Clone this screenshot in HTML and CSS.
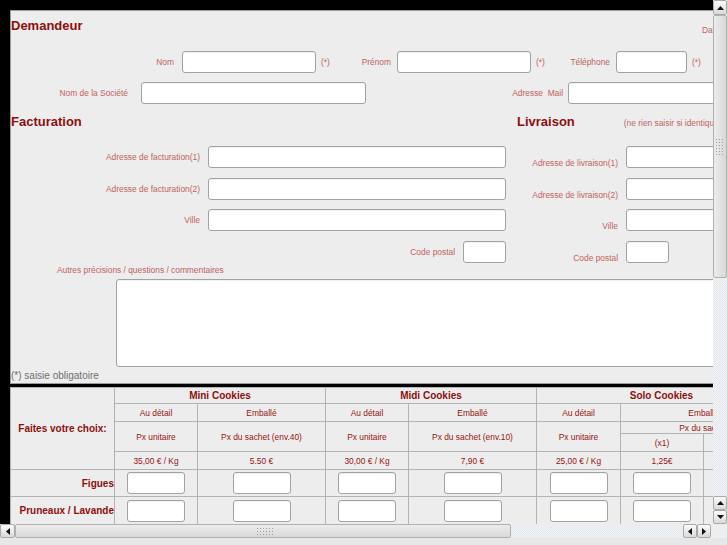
FILE: index.html
```html
<!DOCTYPE html>
<html lang="fr">
  <head>
    <meta charset="UTF-8" />
    <meta name="viewport" content="width=device-width, initial-scale=1.0" />
    <title>Commande de cookies</title>
    <link rel="stylesheet" href="styles.css">
  </head>
  <body>
    <div class="screen">
      <div class="viewport">
        <div class="page">
          <form class="panel demande">
            <div class="head-row">
              <h2 class="title">Demandeur</h2>
              <span class="lbl date">Date de la demande :</span>
            </div>

            <div class="row">
              <label class="lbl l-nom">Nom</label>
              <input class="field w-name" type="text" />
              <span class="lbl req">(*)</span>
              <label class="lbl l-prenom">Prénom</label>
              <input class="field w-name" type="text" />
              <span class="lbl req">(*)</span>
              <label class="lbl l-tel">Téléphone</label>
              <input class="field w-tel" type="text" />
              <span class="lbl req">(*)</span>
            </div>
            <div class="row row-2">
              <label class="lbl l-societe">Nom de la Société</label>
              <input class="field w-societe" type="text" />
              <label class="lbl l-mail">Adresse&nbsp; Mail</label>
              <input class="field w-mail" type="text" />
            </div>

            <div class="cols">
              <div class="col col-fact">
                <h2 class="title">Facturation</h2>
                <div class="rows">
                  <div class="row">
                    <label class="lbl l-fact">Adresse de facturation(1)</label>
                    <input class="field w-addr" type="text" />
                  </div>
                  <div class="row">
                    <label class="lbl l-fact">Adresse de facturation(2)</label>
                    <input class="field w-addr" type="text" />
                  </div>
                  <div class="row tight">
                    <label class="lbl l-fact">Ville</label>
                    <input class="field w-addr" type="text" />
                  </div>
                  <div class="row">
                    <label class="lbl l-cp">Code postal</label>
                    <input class="field w-cp" type="text" />
                  </div>
                </div>
              </div>

              <div class="col col-livr">
                <div class="head-livr">
                  <h2 class="title">Livraison</h2>
                  <span class="lbl note">(ne rien saisir si identique à l'adresse de facturation)</span>
                </div>
                <div class="rows">
                  <div class="row bottom">
                    <label class="lbl l-livr">Adresse de livraison(1)</label>
                    <input class="field w-addr" type="text" />
                  </div>
                  <div class="row bottom">
                    <label class="lbl l-livr">Adresse de livraison(2)</label>
                    <input class="field w-addr" type="text" />
                  </div>
                  <div class="row bottom tight">
                    <label class="lbl l-livr">Ville</label>
                    <input class="field w-addr" type="text" />
                  </div>
                  <div class="row bottom">
                    <label class="lbl l-livr">Code postal</label>
                    <input class="field w-cp" type="text" />
                  </div>
                </div>
              </div>
            </div>

            <p class="lbl comment-lbl">Autres précisions / questions / commentaires</p>
            <textarea class="field comments"></textarea>
            <p class="mandatory">(*) saisie obligatoire</p>
          </form>

          <div class="panel choix">
            <div class="cell head r5">Faites votre choix:</div>
            <div class="cell head c2">Mini Cookies</div>
            <div class="cell head c2">Midi Cookies</div>
            <div class="cell head c3">Solo Cookies</div>

            <div class="cell">Au détail</div>
            <div class="cell">Emballé</div>
            <div class="cell">Au détail</div>
            <div class="cell">Emballé</div>
            <div class="cell">Au détail</div>
            <div class="cell c2">Emballé</div>

            <div class="cell r2">Px unitaire</div>
            <div class="cell r2">Px du sachet (env.40)</div>
            <div class="cell r2">Px unitaire</div>
            <div class="cell r2">Px du sachet (env.10)</div>
            <div class="cell r2">Px unitaire</div>
            <div class="cell c2">Px du sachet</div>
            <div class="cell">(x1)</div>
            <div class="cell">(x12)</div>

            <div class="cell">35,00 € / Kg</div>
            <div class="cell">5.50 €</div>
            <div class="cell">30,00 € / Kg</div>
            <div class="cell">7,90 €</div>
            <div class="cell">25,00 € / Kg</div>
            <div class="cell">1,25€</div>
            <div class="cell">14,00€</div>

            <div class="cell head name">Figues</div>
            <div class="cell"><input class="field qty" type="text" /></div>
            <div class="cell"><input class="field qty" type="text" /></div>
            <div class="cell"><input class="field qty" type="text" /></div>
            <div class="cell"><input class="field qty" type="text" /></div>
            <div class="cell"><input class="field qty" type="text" /></div>
            <div class="cell"><input class="field qty" type="text" /></div>
            <div class="cell"><input class="field qty" type="text" /></div>

            <div class="cell head name">Pruneaux / Lavande</div>
            <div class="cell"><input class="field qty" type="text" /></div>
            <div class="cell"><input class="field qty" type="text" /></div>
            <div class="cell"><input class="field qty" type="text" /></div>
            <div class="cell"><input class="field qty" type="text" /></div>
            <div class="cell"><input class="field qty" type="text" /></div>
            <div class="cell"><input class="field qty" type="text" /></div>
            <div class="cell"><input class="field qty" type="text" /></div>
          </div>
        </div>
      </div>

      <div class="vscroll">
        <div class="sb-btn v-top">
          <svg width="7" height="4" viewBox="0 0 7 4"><polygon points="0,4 7,4 3.5,0" /></svg>
        </div>
        <div class="sb-thumb v-thumb"><span class="grip v-grip"></span></div>
        <div class="sb-track"></div>
        <div class="sb-btn v-small">
          <svg width="7" height="4" viewBox="0 0 7 4"><polygon points="0,4 7,4 3.5,0" /></svg>
        </div>
        <div class="sb-btn v-small">
          <svg width="7" height="4" viewBox="0 0 7 4"><polygon points="0,0 7,0 3.5,4" /></svg>
        </div>
      </div>

      <div class="hscroll">
        <div class="sb-btn h-left">
          <svg width="4" height="7" viewBox="0 0 4 7"><polygon points="4,0 4,7 0,3.5" /></svg>
        </div>
        <div class="sb-thumb h-thumb"><span class="grip h-grip"></span></div>
        <div class="sb-track"></div>
        <div class="sb-btn h-small">
          <svg width="4" height="7" viewBox="0 0 4 7"><polygon points="4,0 4,7 0,3.5" /></svg>
        </div>
        <div class="sb-btn h-small">
          <svg width="4" height="7" viewBox="0 0 4 7"><polygon points="0,0 0,7 4,3.5" /></svg>
        </div>
      </div>
      <div class="corner"></div>
      <div class="frame-bottom"></div>
    </div>
  </body>
</html>
```

FILE: styles.css
```css
html,
body {
  margin: 0;
  overflow: hidden;
  background: #e9e9e9;
  font-family: "Liberation Sans", Arial, sans-serif;
}

.screen {
  width: 727px;
  height: 545px;
  display: grid;
  grid-template-columns: 713px 14px;
  grid-template-rows: 524px 14px 7px;
}

.viewport {
  overflow: hidden;
  background: #000;
}

.page {
  width: 1100px;
  padding: 10px 0 0 10px;
}

.panel {
  background: #ededed;
  box-sizing: border-box;
}

/* demandeur form */
.demande {
  height: 374px;
  margin: 0;
  border: 1px solid #9c9c9c;
  border-right: none;
}

.title {
  margin: 0;
  font-size: 13px;
  line-height: 16px;
  font-weight: bold;
  color: #8e0f0f;
}

.lbl {
  font-size: 8.4px;
  line-height: 10px;
  color: #bf6262;
  white-space: nowrap;
}

.head-row {
  display: flex;
  align-items: flex-start;
  height: 16px;
  padding-top: 7px;
}

.head-row .title {
  width: 691px;
}

.date {
  margin-top: 7px;
}

.row {
  display: flex;
  align-items: center;
  height: 22px;
  margin-top: 17px;
}

.row-2 {
  margin-top: 9px;
}

.row .lbl {
  box-sizing: border-box;
  text-align: right;
  padding-right: 8px;
}

.row .req {
  width: 35px;
  padding: 0 0 0 5px;
  text-align: left;
}

.l-nom { width: 171px; }
.l-prenom { width: 46px; }
.l-tel { width: 50px; }
.l-prenom,
.l-tel { padding-right: 6px !important; }
.l-societe { width: 130px; padding-right: 13px !important; }
.l-mail { width: 202px; padding-right: 5px !important; }
.l-fact { width: 197px; }
.l-cp { width: 452px; }
.l-livr { width: 109px; }

.field {
  box-sizing: border-box;
  height: 22px;
  margin: 0;
  padding: 0 3px;
  border: 1px solid #a2a2a2;
  border-radius: 3px;
  background: #fff;
  box-shadow: inset 0 1px 1px rgba(0, 0, 0, 0.06);
  font-family: inherit;
  font-size: 11px;
}

.w-name { width: 134px; }
.w-tel { width: 71px; }
.w-societe { width: 225px; }
.w-mail { width: 220px; }
.w-addr { width: 298px; }
.w-cp { width: 43px; }

.cols {
  display: flex;
  margin-top: 10px;
}

.col-fact {
  width: 506px;
}

.col-livr {
  width: 560px;
}

.head-livr {
  display: flex;
  align-items: baseline;
}

.note {
  margin-left: 49px;
}

.rows {
  padding-top: 16px;
}

.rows .row {
  margin-top: 10px;
}

.rows .row:first-child {
  margin-top: 0;
}

.rows .row.tight {
  margin-top: 9px;
}

.row.bottom {
  align-items: flex-end;
}

.comment-lbl {
  margin: 2px 0 0;
  padding-left: 46px;
}

.comments {
  display: block;
  width: 700px;
  height: 88px;
  margin: 4px 0 0 105px;
  resize: none;
}

.mandatory {
  margin: 3px 0 0;
  font-size: 10px;
  line-height: 12px;
  color: #6f6f6f;
}

/* choice table */
.choix {
  margin-top: 3px;
  display: grid;
  grid-template-columns: 104px 83px 128px 83px 128px 84px 83px 83px;
  grid-template-rows: 16px 18px 12px 18px 18px 27px 28px;
  border-top: 1px solid #b3b3b3;
  border-left: 1px solid #b3b3b3;
}

.cell {
  box-sizing: border-box;
  display: flex;
  align-items: center;
  justify-content: center;
  border-right: 1px solid #b3b3b3;
  border-bottom: 1px solid #b3b3b3;
  font-size: 8.4px;
  color: #961313;
  white-space: nowrap;
  overflow: hidden;
}

.cell.head {
  font-size: 10px;
  font-weight: bold;
  color: #8e0f0f;
}

.cell.name {
  justify-content: flex-end;
}

.c2 { grid-column: span 2; }
.c3 { grid-column: span 3; }
.r2 { grid-row: span 2; }
.r5 { grid-row: span 5; }

.qty {
  width: 58px;
}

/* window scrollbars */
.sb-track {
  flex: 1;
  background: repeating-conic-gradient(#e2e6ea 0 25%, #f3f5f7 0 50%) 0 0 / 2px 2px;
}

.vscroll {
  display: flex;
  flex-direction: column;
  background: #eceef0;
}

.hscroll {
  display: flex;
  background: #eceef0;
  padding-right: 2px;
}

.sb-btn {
  box-sizing: border-box;
  display: flex;
  align-items: center;
  justify-content: center;
  border: 1px solid #a9a9a9;
  border-radius: 2px;
  background: linear-gradient(#fbfbfb, #dadada);
}

.sb-btn svg {
  fill: #111;
}

.v-top { height: 15px; }
.v-small { height: 14px; }
.h-left { width: 15px; }
.h-small { width: 14px; }

.sb-thumb {
  box-sizing: border-box;
  display: flex;
  align-items: center;
  justify-content: center;
  border: 1px solid #b1b1b1;
  border-radius: 2px;
}

.v-thumb {
  height: 263px;
  background: linear-gradient(to right, #ececec, #d9d9d9);
}

.h-thumb {
  width: 496px;
  justify-content: flex-start;
  padding-left: 240px;
  background: linear-gradient(#ececec, #d9d9d9);
}

.grip {
  display: block;
  background: radial-gradient(circle, #9d9d9d 0.6px, transparent 0.9px) 0 0 / 3px 3px;
}

.v-grip {
  width: 10px;
  height: 18px;
}

.h-grip {
  width: 18px;
  height: 9px;
}

.corner {
  background: #eceef0;
}

.frame-bottom {
  grid-column: 1 / 3;
  background: #e7e7e7;
}
```
